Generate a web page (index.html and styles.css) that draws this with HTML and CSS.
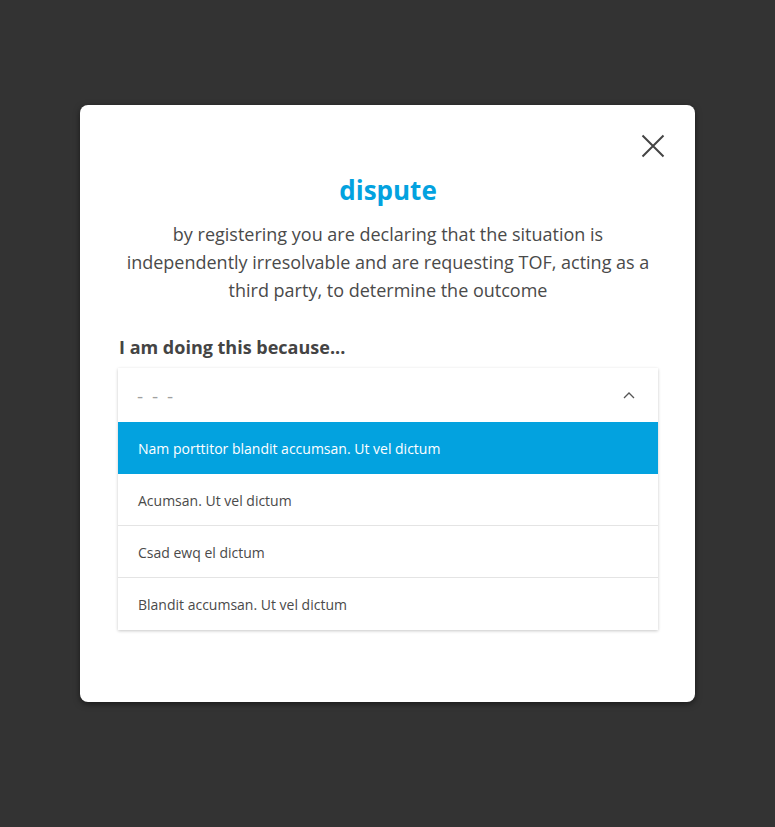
FILE: index.html
```html
<!DOCTYPE html>
<html lang="en">
<head>
<meta charset="utf-8">
<title>dispute</title>
<link rel="stylesheet" href="styles.css">
</head>
<body>
<div class="overlay">
  <div class="modal">
    <button class="close" aria-label="Close">
      <svg width="24" height="24" viewBox="0 0 24 24"><path d="M1.5 1.5L22.5 22.5M22.5 1.5L1.5 22.5" stroke="#444" stroke-width="2" fill="none"/></svg>
    </button>
    <h1 class="title">dispute</h1>
    <p class="desc">by registering you are declaring that the situation is independently irresolvable and are requesting TOF, acting as a third party, to determine the outcome</p>
    <div class="label">I am doing this because...</div>
    <div class="select">
      <div class="select-head">
        <span class="placeholder">- - -</span>
        <svg class="chev" width="12" height="8" viewBox="0 0 12 8"><path d="M1 7L6 2L11 7" stroke="#555" stroke-width="1.3" fill="none"/></svg>
      </div>
      <ul class="options">
        <li class="option active">Nam porttitor blandit accumsan. Ut vel dictum</li>
        <li class="option">Acumsan. Ut vel dictum</li>
        <li class="option">Csad ewq el dictum</li>
        <li class="option">Blandit accumsan. Ut vel dictum</li>
      </ul>
    </div>
  </div>
</div>
</body>
</html>
```
FILE: styles.css
```css
* { box-sizing: border-box; }
html, body { margin: 0; padding: 0; }
body {
  background: #333333;
  font-family: "Open Sans", "Noto Sans", sans-serif;
  width: 775px;
  height: 827px;
}
.overlay {
  padding-top: 105px;
  padding-left: 80px;
}
.modal {
  position: relative;
  width: 615px;
  height: 597px;
  background: #fff;
  border-radius: 8px;
  box-shadow: 0 2px 6px rgba(0,0,0,0.5);
  padding: 67px 37px 0 38px;
}
.close {
  position: absolute;
  top: 29px;
  right: 30px;
  width: 24px;
  height: 24px;
  padding: 0;
  border: 0;
  background: none;
  display: flex;
}
.title {
  margin: 0;
  text-align: center;
  color: #03a2df;
  font-size: 26px;
  font-weight: 700;
  line-height: 36px;
}
.desc {
  margin: 12px 0 0;
  text-align: center;
  color: #4a4a4a;
  font-size: 18px;
  line-height: 28px;
}
.label {
  margin-top: 29px;
  padding-left: 1px;
  color: #444;
  font-size: 18px;
  font-weight: 700;
  line-height: 28px;
}
.select {
  margin-top: 7px;
  background: #fff;
  box-shadow: 0 1px 3px rgba(0,0,0,0.22);
}
.select-head {
  height: 54px;
  display: flex;
  align-items: center;
  justify-content: space-between;
  padding: 0 23px 0 19px;
}
.placeholder {
  color: #a0a0a0;
  font-size: 19px;
  letter-spacing: 2px;
  line-height: 20px;
  padding-top: 2px;
}
.options {
  list-style: none;
  margin: 0;
  padding: 0;
}
.option {
  height: 52px;
  display: flex;
  align-items: center;
  padding: 1px 0 0 20px;
  font-size: 14px;
  color: #4a4a4a;
  border-bottom: 1px solid #e4e4e4;
}
.option:last-child { border-bottom: 0; padding-top: 0; }
.option.active {
  background: #03a2df;
  color: #fff;
  border-bottom: 0;
  padding-top: 0;
}
```
